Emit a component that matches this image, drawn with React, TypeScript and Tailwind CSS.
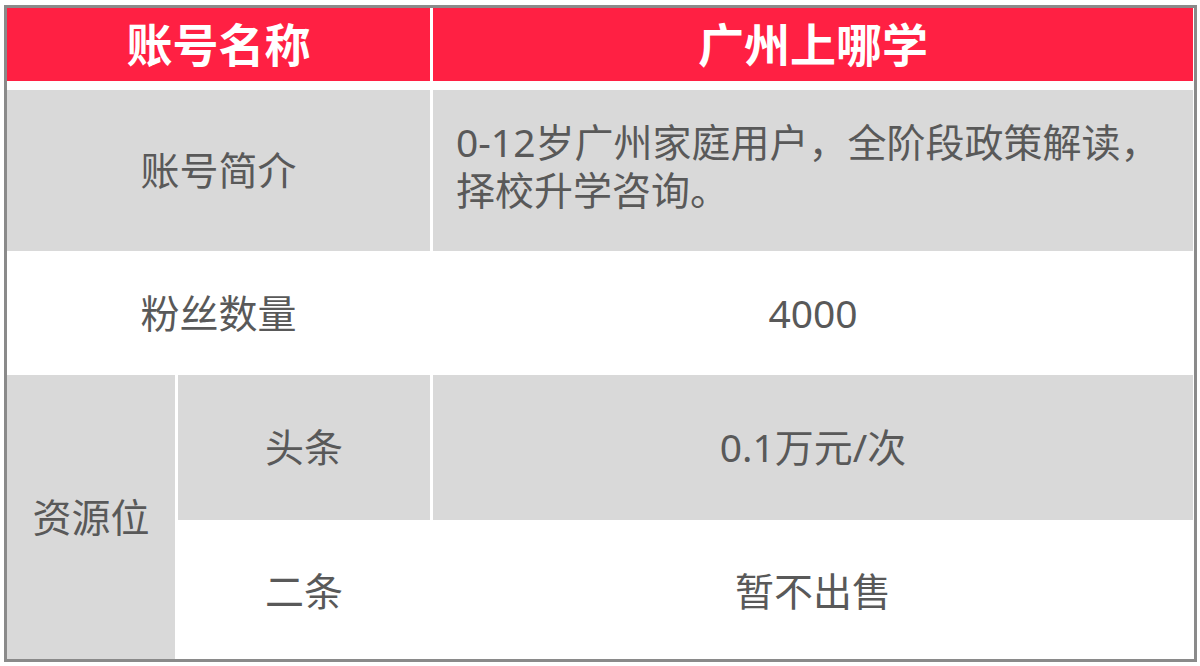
const font = { fontFamily: '"Noto Sans", "Noto Sans CJK SC", sans-serif' };

function Cell({
  className = '',
  children,
}: {
  className?: string;
  children?: React.ReactNode;
}) {
  return <div className={`flex items-center justify-center ${className}`}>{children}</div>;
}

export default function App() {
  return (
    <div className="w-[1200px] h-[666px] bg-white pl-[4px] pt-[5px]" style={font}>
      <div className="w-[1193px] h-[657px] border-[3px] border-[#8a8a8a] bg-white">
        <div className="grid grid-cols-[168px_252px_760px] grid-rows-[79px_161px_118px_145px_136px] gap-[3px] text-[39px] text-[#595959]">
          <Cell className="col-span-2 bg-[#ff2043] border-b-[6px] border-white text-white text-[46px] font-bold">
            账号名称
          </Cell>
          <Cell className="bg-[#ff2043] border-b-[6px] border-white text-white text-[46px] font-bold">
            广州上哪学
          </Cell>

          <Cell className="col-span-2 bg-[#d9d9d9]">账号简介</Cell>
          <div className="flex items-center bg-[#d9d9d9] pl-[23px] pb-[10px] leading-[48px]">
            <p>
              0-12岁广州家庭用户，全阶段政策解读，
              <br />
              择校升学咨询。
            </p>
          </div>

          <Cell className="col-span-2 bg-white">粉丝数量</Cell>
          <Cell className="bg-white">4000</Cell>

          <Cell className="row-span-2 bg-[#d9d9d9]">资源位</Cell>
          <Cell className="bg-[#d9d9d9]">头条</Cell>
          <Cell className="bg-[#d9d9d9]">0.1万元/次</Cell>
          <Cell className="bg-white">二条</Cell>
          <Cell className="bg-white">暂不出售</Cell>
        </div>
      </div>
    </div>
  );
}
